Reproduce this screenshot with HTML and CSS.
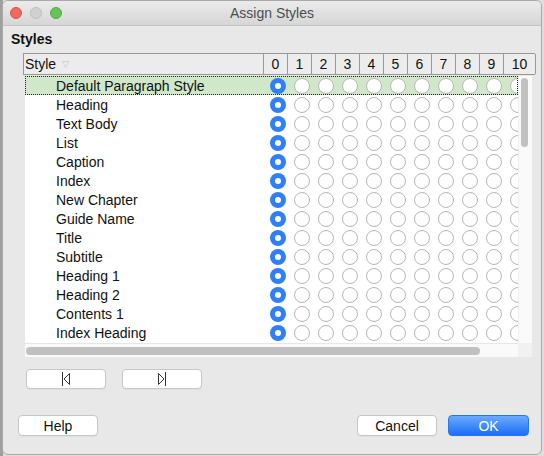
FILE: index.html
```html
<!DOCTYPE html>
<html>
<head>
<meta charset="utf-8">
<link rel="stylesheet" href="styles.css">
</head>
<body>
<div class="window">
  <div class="titlebar">
    <div class="lights">
      <span class="light red"></span>
      <span class="light gray"></span>
      <span class="light green"></span>
    </div>
    <div class="title">Assign Styles</div>
    <div></div>
  </div>
  <div class="content">
    <div class="label">Styles</div>
    <div class="table">
      <div class="thead">
        <div class="th th-name">Style <span class="sort">▽</span></div>
        <div class="th">0</div><div class="th">1</div><div class="th">2</div><div class="th">3</div><div class="th">4</div>
        <div class="th">5</div><div class="th">6</div><div class="th">7</div><div class="th">8</div><div class="th">9</div>
        <div class="th th-last">10</div>
      </div>
      <div class="listbox">
        <div class="viewport" id="rows"></div>
        <div class="vscroll"><div class="vthumb"></div></div>
        <div class="hscroll"><div class="hthumb"></div></div>
        <div class="corner"></div>
      </div>
    </div>
    <div class="navrow">
      <button class="btn nav">
        <svg width="10" height="16" viewBox="0 0 10 16"><path d="M1.5 1V15" stroke="#333" stroke-width="1" fill="none"/><path d="M8.5 2.5L3 8L8.5 13.5Z" stroke="#333" stroke-width="1" fill="none"/></svg>
      </button>
      <button class="btn nav">
        <svg width="10" height="16" viewBox="0 0 10 16"><path d="M1.5 2.5L7 8L1.5 13.5Z" stroke="#333" stroke-width="1" fill="none"/><path d="M8.5 1V15" stroke="#333" stroke-width="1" fill="none"/></svg>
      </button>
    </div>
    <div class="footer">
      <button class="btn">Help</button>
      <div class="spacer"></div>
      <button class="btn">Cancel</button>
      <button class="btn ok">OK</button>
    </div>
  </div>
</div>
<script>
  var names = ["Default Paragraph Style","Heading","Text Body","List","Caption","Index","New Chapter","Guide Name","Title","Subtitle","Heading 1","Heading 2","Contents 1","Index Heading"];
  var html = "";
  names.forEach(function(n, i){
    html += '<div class="row' + (i === 0 ? ' current' : '') + '"><div class="name">' + n + '</div>';
    for (var k = 0; k < 11; k++) {
      html += '<div class="cell"><span class="radio' + (k === 0 ? ' on' : '') + '"></span></div>';
    }
    html += '</div>';
  });
  document.getElementById("rows").innerHTML = html;
</script>
</body>
</html>
```

FILE: styles.css
```css
html, body {
  margin: 0;
  padding: 0;
}
body {
  width: 544px;
  height: 456px;
  overflow: hidden;
  background: linear-gradient(to right, #9f9f9f 0, #9f9f9f 3px, #dedede 3px);
  font-family: "Liberation Sans", Arial, sans-serif;
}
.window {
  width: 540px;
  height: 455px;
  margin-left: 2px;
  box-sizing: border-box;
  border: 1px solid #a9a9a9;
  border-radius: 6px;
  background: #e8e8e8;
  overflow: hidden;
  display: flex;
  flex-direction: column;
}
.titlebar {
  height: 24px;
  flex: none;
  border-bottom: 1px solid #c4c4c4;
  background: linear-gradient(#ebebeb, #d6d6d6);
  display: grid;
  grid-template-columns: 1fr auto 1fr;
  align-items: center;
}
.lights {
  display: flex;
  gap: 8px;
  padding-left: 7px;
}
.light {
  width: 12px;
  height: 12px;
  border-radius: 50%;
  box-sizing: border-box;
}
.red { background: #ee6a5f; border: 1px solid #d6554b; }
.gray { background: #d1d1d1; border: 1px solid #bebebe; }
.green { background: #62c555; border: 1px solid #52ab45; }
.title {
  font-size: 14px;
  color: #4d4d4d;
}
.content {
  flex: 1;
  display: flex;
  flex-direction: column;
}
.label {
  margin: 5px 0 0 8px;
  font-size: 14px;
  font-weight: bold;
  line-height: 16px;
  color: #111;
}
.table {
  margin: 6px 0 0 20px;
}
.thead {
  display: flex;
  width: 512px;
  height: 22px;
  box-sizing: border-box;
  border: 1px solid #999;
  border-right: none;
  background: #ececec;
}
.th {
  width: 24px;
  flex: none;
  box-sizing: border-box;
  border-right: 1px solid #999;
  font-size: 14px;
  line-height: 20px;
  text-align: center;
  color: #111;
}
.th-name {
  width: 240px;
  text-align: left;
  padding-left: 1px;
}
.th-last {
  width: 32px;
}
.sort {
  font-size: 9px;
  color: #c4c4c4;
  vertical-align: 2px;
  margin-left: 2px;
}
.listbox {
  margin: 1px 0 0 2px;
  width: 507px;
  height: 281px;
  display: grid;
  grid-template-columns: 493px 14px;
  grid-template-rows: 267px 14px;
}
.viewport {
  background: #fff;
  overflow: hidden;
}
.row {
  display: flex;
  height: 19px;
  width: 493px;
  box-sizing: border-box;
  white-space: nowrap;
}
.row.current {
  background: #d0e8c9;
  outline: 1px dotted #222;
  outline-offset: -1px;
}
.name {
  width: 241px;
  flex: none;
  box-sizing: border-box;
  padding-left: 31px;
  padding-top: 1px;
  font-size: 14px;
  line-height: 19px;
  color: #111;
}
.cell {
  width: 24px;
  flex: none;
  display: flex;
  align-items: center;
  justify-content: center;
}
.radio {
  width: 16px;
  height: 16px;
  box-sizing: border-box;
  border-radius: 50%;
  border: 1px solid #b6b6b6;
  background: #fff;
  display: flex;
  align-items: center;
  justify-content: center;
}
.radio.on {
  border: none;
  background: #2f7ff6;
}
.radio.on::after {
  content: "";
  width: 6px;
  height: 6px;
  border-radius: 50%;
  background: #fff;
}
.vscroll {
  background: #fafafa;
  border-left: 1px solid #efefef;
}
.vthumb {
  margin: 2px 0 0 2px;
  width: 7px;
  height: 69px;
  border-radius: 4px;
  background: #c1c1c1;
}
.hscroll {
  background: #fafafa;
  border-top: 1px solid #e6e6e6;
  box-sizing: border-box;
  padding: 3px 0 0 1px;
}
.hthumb {
  width: 454px;
  height: 8px;
  border-radius: 4px;
  background: #c1c1c1;
}
.corner {
  background: #f1f1f1;
}
.navrow {
  display: flex;
  gap: 16px;
  margin: 12px 0 0 23px;
}
.btn {
  width: 80px;
  height: 20px;
  box-sizing: border-box;
  border: 1px solid #c6c6c6;
  border-radius: 4px;
  background: #fff;
  font-family: "Liberation Sans", Arial, sans-serif;
  font-size: 14px;
  color: #111;
  padding: 0;
  display: flex;
  align-items: center;
  justify-content: center;
  box-shadow: 0 0.5px 0 rgba(0,0,0,0.06);
}
.nav svg {
  display: block;
}
.footer {
  display: flex;
  margin: 26px 12px 0 15px;
}
.footer .btn {
  height: 21px;
}
.spacer {
  flex: 1;
}
.ok {
  margin-left: 11px;
  width: 81px;
  border: 1px solid #2a74f0;
  background: linear-gradient(#6aabff, #1b6ff6);
  color: #fff;
}
```
